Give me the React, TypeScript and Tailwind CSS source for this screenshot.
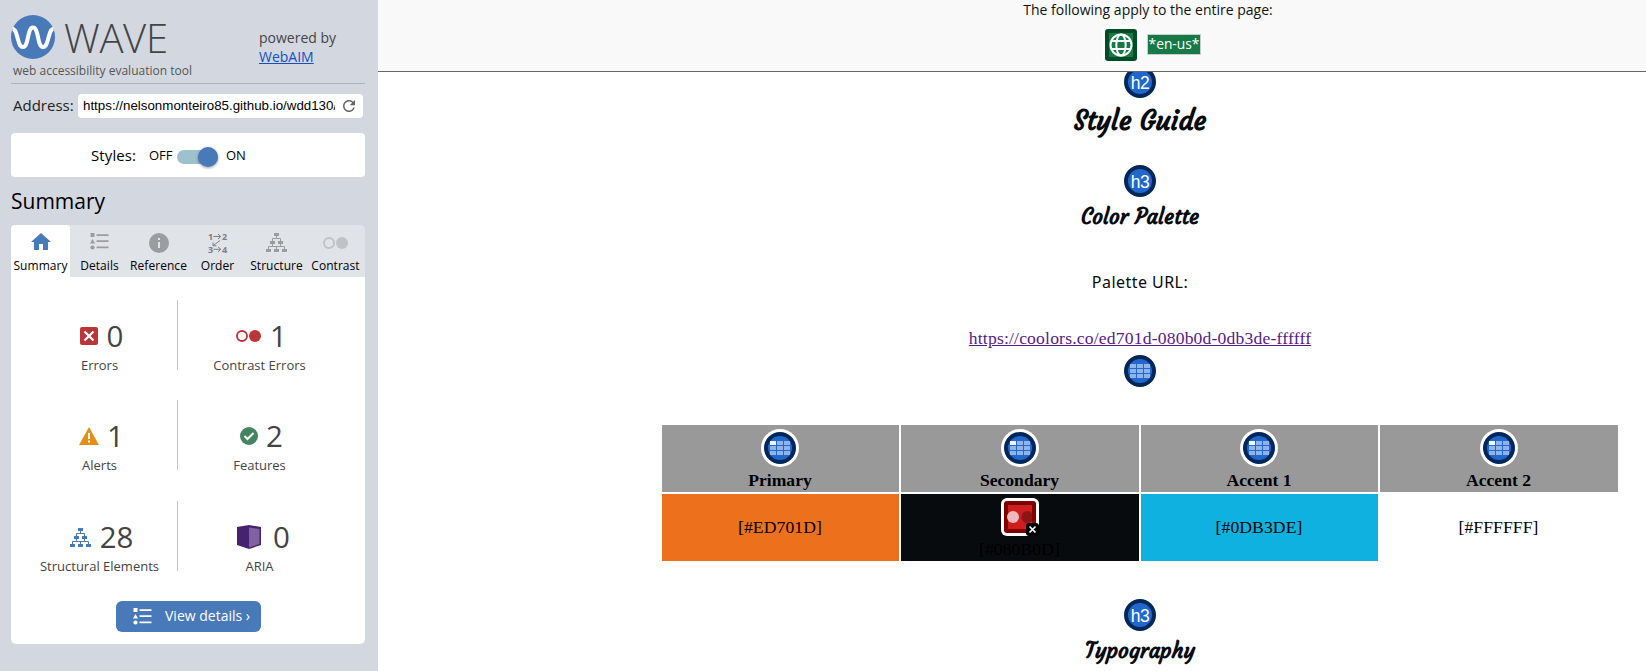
import React from "react";

const OPEN = "font-['Open_Sans','Noto_Sans',sans-serif]";
const TIMES = "font-['Liberation_Serif',serif]";

function ListIcon({ className }: { className: string }) {
  return (
    <svg viewBox="0 0 19 17" className={className} fill="currentColor">
      <rect x="0.5" y="0" width="4" height="4" />
      <path d="M2.5 6 5 10.4H0z" />
      <circle cx="2.5" cy="14.5" r="2.1" />
      <path d="M6.5 1.2h12v1.8h-12zM6.5 7.3h12v1.8h-12zM6.5 13.5h12v1.8h-12z" />
    </svg>
  );
}

function TreeIcon({ className }: { className: string }) {
  return (
    <svg viewBox="0 0 21 19" className={className} fill="currentColor">
      <path d="M8 0h5v3H8zM4 8h5v3H4zM12 8h5v3h-5zM0 16h5v3H0zM8 16h5v3H8zM16 16h5v3h-5z" />
      <path
        d="M10.5 3v2.5M6.5 8V5.5h8V8M6.5 11v2.5M14.5 11v2.5M2.5 16v-2.5h16V16M10.5 13.5V16"
        fill="none"
        stroke="currentColor"
      />
    </svg>
  );
}

function ContrastIcon({ className }: { className: string }) {
  return (
    <svg viewBox="0 0 25 12" className={className}>
      <circle cx="6" cy="6" r="5" fill="none" stroke="currentColor" strokeWidth="1.9" />
      <circle cx="19" cy="6" r="6" fill="currentColor" />
    </svg>
  );
}

function OrderIcon({ className }: { className: string }) {
  return (
    <svg viewBox="-2 -4 24 28" className={className}>
      <g fill="currentColor" fontFamily="Open Sans" fontWeight="700" fontSize="9">
        <text x="0" y="6.8">1</text>
        <text x="14" y="6.8">2</text>
        <text x="0" y="19.5">3</text>
        <text x="14" y="19.5">4</text>
      </g>
      <path
        d="M5.5 3.5h7M10 1l2.8 2.5L10 6M12 7.5 5 12.8M5 9.5v3.3h3.4M5.5 16.3h7M10 13.8l2.8 2.5-2.8 2.5"
        fill="none"
        stroke="currentColor"
      />
    </svg>
  );
}

function Tab({ label, active, children }: { label: string; active?: boolean; children: React.ReactNode }) {
  return (
    <div className={"flex w-[59px] flex-col items-center " + (active ? "rounded-t-[4px] bg-white" : "")}>
      <div className="flex h-[33px] w-full items-center justify-center pt-[3px]">{children}</div>
      <div className="h-4 text-[12px] leading-4 tracking-[0.05px] whitespace-nowrap text-black">{label}</div>
    </div>
  );
}

function Stat({ icon, value, label, spacing }: { icon: React.ReactNode; value: string; label: string; spacing: string }) {
  return (
    <div className="flex w-[177px] flex-col items-center text-[#444]">
      <div className={"mt-[19px] flex h-[34px] items-center " + spacing}>
        {icon}
        <span className="text-[29.5px] leading-[34px]">{value}</span>
      </div>
      <div className="mt-[3px] text-[13px] leading-[18px]">{label}</div>
    </div>
  );
}

function HeadingIcon({ level }: { level: string }) {
  return (
    <svg viewBox="0 0 32 32" className="block size-8 shrink-0">
      <circle cx="16" cy="16" r="14" fill="#2068ce" stroke="#00275a" strokeWidth="4" />
      <text x="16" y="22.5" textAnchor="middle" fontFamily="Liberation Sans" fontSize="17.5" letterSpacing="-0.4" fill="#fff">
        {level}
      </text>
    </svg>
  );
}

function TableIcon({ header }: { header?: boolean }) {
  return (
    <svg viewBox="0 0 38 38" className="block size-[38px] shrink-0">
      <circle cx="19" cy="19" r="19" fill="#fff" />
      <circle cx="19" cy="19" r="14" fill="#2068ce" stroke="#00275a" strokeWidth="4" />
      {[0, 1, 2].map((r) =>
        [0, 1, 2].map((c) => (
          <rect
            key={r + "-" + c}
            x={9 + c * 7}
            y={12 + r * 5}
            width="6"
            height="4"
            fill={header && r === 0 && c === 0 ? "#fff" : "#90b4e7"}
          />
        )),
      )}
    </svg>
  );
}

function Sidebar() {
  return (
    <aside className={"flex h-[671px] w-[378px] shrink-0 flex-col bg-[#d3d8e0] px-[11px] text-[#444] " + OPEN}>
      <div className="flex h-[84px] w-[354px] justify-between border-b border-[#b0b4b9]">
        <div className="pt-[15px]">
          <div className="flex h-11">
            <svg viewBox="0 0 44 44" className="size-11">
              <circle cx="22" cy="22" r="22" fill="#4879b9" />
              <path
                d="M1.5 14C4.5 14 5.5 19 7 24.500C8.500 30 9.500 32 12 32C18 32 16 12.500 22 12.500C28 12.500 26 32 32 32C34.500 32 35.500 30 37 24.500C38.500 19 39.500 14 42.500 14"
                fill="none"
                stroke="#fff"
                strokeWidth="4"
              />
            </svg>
            <span className="ml-[9px] text-[40px] leading-[46px] font-light tracking-[-0.3px]">WAVE</span>
          </div>
          <div className="ml-[2px] text-[12px] leading-6 text-[#555]">web accessibility evaluation tool</div>
        </div>
        <div className="w-[106px] pt-[28px] text-[14px] leading-[19px]">
          powered by
          <br />
          <a className="text-[#1450c0] underline">WebAIM</a>
        </div>
      </div>
      <div className="mt-[10px] flex h-6 items-center pl-[2px] text-black">
        <span className="w-[65px] text-[15px] leading-[22px] -mt-[2px] text-[#222]">Address:</span>
        <div className="flex h-6 w-[285px] items-center rounded-[4px] bg-white pl-[5px]">
          <div className="w-[252px] overflow-hidden font-['Liberation_Sans',sans-serif] text-[13.33px] leading-6 whitespace-nowrap">
            https://nelsonmonteiro85.github.io/wdd130/
          </div>
          <svg viewBox="4 4 16 16" className="ml-2 size-3 text-[#666]" fill="currentColor">
            <path d="M17.650 6.350C16.200 4.900 14.210 4 12 4c-4.420 0-7.990 3.580-7.990 8s3.570 8 7.990 8c3.730 0 6.840-2.550 7.730-6h-2.080c-.82 2.330-3.040 4-5.650 4-3.310 0-6-2.690-6-6s2.690-6 6-6c1.660 0 3.140.69 4.220 1.780L13 11h7V4z" />
          </svg>
        </div>
      </div>
      <div className="mt-[15px] flex h-11 w-[354px] items-center rounded-[4px] bg-white pl-[80px] text-black">
        <span className="w-[58px] text-[15px] leading-[44px] tracking-[0.1px]">Styles:</span>
        <span className="w-7 text-[13px] leading-[44px]">OFF</span>
        <div className="mt-[4px] flex h-[14px] w-[41px] items-center justify-end rounded-full bg-[#9fc1cb]">
          <div className="size-5 shrink-0 rounded-full bg-[#4879b9] shadow-[0_1px_3px_rgba(0,0,0,0.4)]" />
        </div>
        <span className="ml-2 text-[13px] leading-[44px]">ON</span>
      </div>
      <h2 className="mt-[10px] h-[38px] text-[21px] leading-[28px] text-black">Summary</h2>
      <div className="flex h-[52px] w-[354px] rounded-t-[5px] bg-[#e0e3e8] text-[#9a9d9f]">
        <Tab label="Summary" active>
          <svg viewBox="0 0 20 17" className="mt-[-3px] h-[17px] w-5" fill="#4879b9">
            <path d="M8 17v-6h4v6h5V9h3L10 0 0 9h3v8z" />
          </svg>
        </Tab>
        <Tab label="Details">
          <ListIcon className="mt-[-4px] h-[17px] w-[19px]" />
        </Tab>
        <Tab label="Reference">
          <svg viewBox="0 0 20 20" className="size-5">
            <circle cx="10" cy="10" r="10" fill="currentColor" />
            <path d="M9 5h2v2H9zM9 9h2v6H9z" fill="#e0e3e8" />
          </svg>
        </Tab>
        <Tab label="Order">
          <OrderIcon className="-mt-px h-7 w-6 text-[#7d8082]" />
        </Tab>
        <Tab label="Structure">
          <TreeIcon className="-mt-px h-[19px] w-[21px]" />
        </Tab>
        <Tab label="Contrast">
          <ContrastIcon className="h-3 w-[25px] text-[#bfc2c6]" />
        </Tab>
      </div>
      <div className="flex h-[367px] w-[354px] flex-col rounded-b-[5px] bg-white pt-[23px]">
        <div className="flex h-[100px]">
          <Stat
            spacing="gap-[9px] pl-1"
            value="0"
            label="Errors"
            icon={
              <svg viewBox="0 0 18 18" className="size-[18px]">
                <rect width="18" height="18" rx="2" fill="#bc3539" />
                <path d="M4.500 4.500l9 9M13.500 4.500l-9 9" stroke="#fff" strokeWidth="2.200" />
              </svg>
            }
          />
          <div className="-ml-[11px] h-[70px] w-px bg-[#c6c6c6]" />
          <div className="-ml-[7px]">
            <Stat
              spacing="gap-[9px] pl-1"
              value="1"
              label="Contrast Errors"
              icon={<ContrastIcon className="h-3 w-[25px] text-[#bc3539]" />}
            />
          </div>
        </div>
        <div className="flex h-[101px]">
          <Stat
            spacing="gap-[8px] pl-1"
            value="1"
            label="Alerts"
            icon={
              <svg viewBox="0 0 20 18" className="h-[18px] w-5">
                <path d="M10 0 20 18H0z" fill="#e38f1c" />
                <path d="M9 6h2v6H9zM9 13.500h2v2H9z" fill="#fff" />
              </svg>
            }
          />
          <div className="-ml-[11px] h-[70px] w-px bg-[#c6c6c6]" />
          <div className="-ml-[7px]">
            <Stat
              spacing="gap-[8px] pl-1"
              value="2"
              label="Features"
              icon={
                <svg viewBox="0 0 18 18" className="size-[18px]">
                  <circle cx="9" cy="9" r="9" fill="#438461" />
                  <path d="M4.500 9l3 3 6-6" fill="none" stroke="#fff" strokeWidth="2" />
                </svg>
              }
            />
          </div>
        </div>
        <div className="flex h-[100px]">
          <Stat
            spacing="gap-[9px] pl-1"
            value="28"
            label="Structural Elements"
            icon={<TreeIcon className="h-[19px] w-[21px] text-[#4879b9]" />}
          />
          <div className="-ml-[11px] h-[70px] w-px bg-[#c6c6c6]" />
          <div className="-ml-[7px]">
            <Stat
              spacing="gap-[12px] pl-2"
              value="0"
              label="ARIA"
              icon={
                <svg viewBox="0 0 24 24" className="size-6">
                  <path d="M0 2 12 0l12 2v18l-12 4L0 20z" fill="#47236f" />
                  <path d="M12 2.500 22.500 4v15L12 22.500z" fill="#8162a1" />
                </svg>
              }
            />
          </div>
        </div>
        <button className="ml-[105px] flex h-[31px] w-[145px] items-center rounded-[6px] bg-[#4879b9] pl-[17px] text-white">
          <ListIcon className="h-[17px] w-[19px]" />
          <span className="ml-[13px] pb-[2px] text-[14px] leading-5 whitespace-nowrap">View details ›</span>
        </button>
      </div>
    </aside>
  );
}

const scriptFont = "font-['Courgette',cursive] font-bold text-[#080b0d] whitespace-nowrap";

function Column({ name, value, width, color, flagged }: { name: string; value: string; width: string; color: string; flagged?: boolean }) {
  return (
    <div className={"flex flex-col gap-[2px] " + width}>
      <div className="flex h-[67px] flex-col items-center bg-[#999] pt-1 pr-px">
        <TableIcon header />
        <div className="mt-[3px] text-[17.6px] leading-5 font-bold">{name}</div>
      </div>
      <div className={"flex h-[67px] flex-col items-center pr-px " + color + (flagged ? " pt-1" : " justify-center pb-[2px]")}>
        {flagged && (
          <svg viewBox="0 0 38 38" className="block size-[38px] shrink-0">
            <rect width="38" height="38" rx="6" fill="#fff" />
            <rect x="3" y="3" width="32" height="32" rx="3" fill="#800000" />
            <rect x="7" y="7" width="24" height="24" fill="#cd1f20" />
            <circle cx="12" cy="19" r="6" fill="#eebabc" />
            <path d="M31 15.200a6 6 0 1 0 0 7.600z" fill="#8f1416" />
            <rect x="25" y="25" width="13" height="13" rx="3" fill="#000" />
            <path d="M28.500 28.500l6 6M34.500 28.500l-6 6" stroke="#fff" strokeWidth="1.700" />
          </svg>
        )}
        <div className={"text-[17.6px] leading-5 tracking-[0.1px] text-black" + (flagged ? " mt-[3px]" : "")}>{value}</div>
      </div>
    </div>
  );
}

export default function App() {
  return (
    <div className="flex h-[671px] w-[1646px] overflow-hidden bg-white">
      <Sidebar />
      <main className="flex w-[1268px] flex-col">
        <header className={"flex h-[72px] shrink-0 flex-col items-center border-b border-[#666] bg-[#f9f9f9] pl-[272px] text-[#111] " + OPEN}>
          <p className="h-[26px] text-[14px] leading-[20px] whitespace-nowrap">The following apply to the entire page:</p>
          <div className="flex items-center pl-[7px]">
            <svg viewBox="0 0 38 38" className="size-[38px]">
              <rect width="38" height="38" rx="6" fill="#fff" />
              <rect x="3" y="3" width="32" height="32" rx="3" fill="#004d25" />
              <rect x="7" y="7" width="24" height="24" fill="#177a46" />
              <g fill="none" stroke="#fff" strokeWidth="2">
                <circle cx="19" cy="19" r="10.500" />
                <ellipse cx="19" cy="19" rx="4.700" ry="10.500" />
                <path d="M9.500 15h19M9.500 23h19" />
              </g>
            </svg>
            <span className="-mt-[2px] ml-[7px] h-[21px] border border-[#ccc] bg-[#177a46] px-px text-[13.8px] leading-[18px] text-white">*en-us*</span>
          </div>
        </header>
        <div className="flex h-[599px] flex-col items-center overflow-hidden pl-[256px]">
          <div className="-mt-[6px]">
            <HeadingIcon level="h2" />
          </div>
          <h2 className={"mt-[6px] h-[34px] text-[27px] leading-[34px] " + scriptFont}>Style Guide</h2>
          <div className="mt-[27px]">
            <HeadingIcon level="h3" />
          </div>
          <h3 className={"mt-1 h-8 text-[21.1px] leading-8 " + scriptFont}>Color Palette</h3>
          <p className="mt-[37px] h-6 font-['Noto_Sans',sans-serif] text-[16px] leading-6 tracking-[0.45px] text-[#080b0d]">Palette URL:</p>
          <a className={"mt-[34px] h-5 text-[17.6px] leading-5 tracking-[0.18px] whitespace-nowrap text-[#551a8b] underline " + TIMES}>
            https://coolors.co/ed701d-080b0d-0db3de-ffffff
          </a>
          <div className="mt-1">
            <TableIcon />
          </div>
          <div className={"mt-[35px] flex w-[956px] shrink-0 gap-[2px] text-black " + TIMES}>
            <Column name="Primary" value="[#ED701D]" width="w-[237px]" color="bg-[#ed701d]" />
            <Column name="Secondary" value="[#080B0D]" width="w-[238px]" color="bg-[#080b0d]" flagged />
            <Column name="Accent 1" value="[#0DB3DE]" width="w-[237px]" color="bg-[#0fb1e0]" />
            <Column name="Accent 2" value="[#FFFFFF]" width="w-[238px]" color="bg-white" />
          </div>
          <div className="mt-[38px]">
            <HeadingIcon level="h3" />
          </div>
          <h3 className={"mt-1 h-8 text-[21.1px] leading-8 " + scriptFont}>Typography</h3>
        </div>
      </main>
    </div>
  );
}
